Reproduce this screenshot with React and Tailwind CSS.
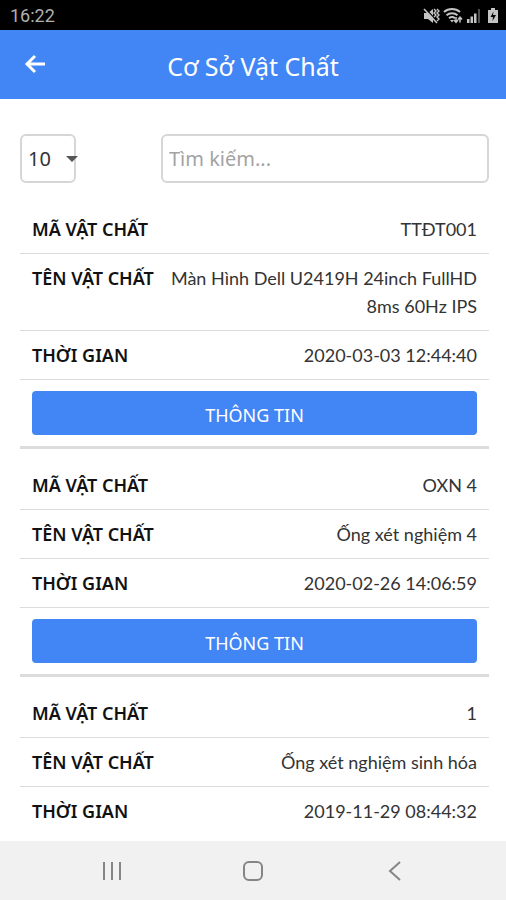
import { useState } from 'react';

const records = [
  { code: 'TTĐT001', name: 'Màn Hình Dell U2419H 24inch FullHD 8ms 60Hz IPS', time: '2020-03-03 12:44:40', hasInfo: true },
  { code: 'OXN 4', name: 'Ống xét nghiệm 4', time: '2020-02-26 14:06:59', hasInfo: true },
  { code: '1', name: 'Ống xét nghiệm sinh hóa', time: '2019-11-29 08:44:32', hasInfo: false },
];

function StatusBar() {
  return (
    <div className="flex h-[30px] shrink-0 items-center justify-between bg-black pr-1.5 pl-2.5 text-[#c4c4c4]">
      <span className="pt-0.5 font-[Roboto,sans-serif] text-lg leading-6 text-[#b0b0b0]">16:22</span>
      <div className="flex items-center gap-[3px] pt-0.5">
        {/* Rung */}
        <svg width="18" height="18" viewBox="0 0 18 18" fill="none" stroke="currentColor">
          <path d="M2 6h4l5-4v14l-5-4H2z" fill="currentColor" stroke="none" />
          <path d="M3 1l11 12" stroke="#000" strokeWidth="1.200" />
          <path d="M2 2l13 14" strokeWidth="1.600" />
          <path d="M12 2l2 2-2 2 2 2-2 2M15 2l2 2-2 2 2 2-2 2 2 2-2 2" strokeWidth="1.400" />
        </svg>
        {/* Wifi */}
        <svg width="20" height="18" viewBox="0 0 20 18" fill="none" stroke="currentColor" strokeWidth="2">
          <path d="M1 5c4.500-4 11.500-4 16 0M3.500 8.200c3-2.700 8-2.700 11 0M6 11.200c2-1.600 4-1.600 6 0" />
          <path d="M7 13l2 2.500 2-2.500z" fill="currentColor" stroke="none" />
          <path d="M13 10v5m-2-2l2 2.300 2-2.300M17 15.500v-5m-2 2l2-2.300 2 2.300" strokeWidth="1.500" />
        </svg>
        {/* Sóng */}
        <svg width="15" height="18" viewBox="0 0 15 18" fill="currentColor">
          <path d="M1 12h2.500v4H1zM4.500 9.500H7V16H4.500zM8 6.500h2.500V16H8z" />
          <path d="M12 2h2v14h-2z" opacity="0.4" />
        </svg>
        {/* Pin */}
        <svg width="16" height="18" viewBox="0 0 16 18">
          <path d="M7 1h4v2h3v13H4V3h3z" fill="currentColor" />
          <path d="M9.500 4.500L6.500 10H9l-.5 4 3.500-6H9z" fill="#000" />
        </svg>
      </div>
    </div>
  );
}

function RecordTable({ record }) {
  const rows = [
    ['MÃ VẬT CHẤT', record.code],
    ['TÊN VẬT CHẤT', record.name],
    ['THỜI GIAN', record.time],
  ];

  return (
    <table className="mb-3 w-full border-separate border-spacing-0 border-b-3 border-[#dcdcdc] text-lg leading-7 last:mb-0 last:border-b-0">
      <tbody className="[&>tr:last-child>*]:border-b-0">
        {rows.map(([label, value]) => (
          <tr key={label}>
            <th
              scope="row"
              className="border-b border-[#dcdcdc] py-2.5 pl-3 text-left align-top font-semibold whitespace-nowrap text-[#111111]"
            >
              {label}
            </th>
            <td className="border-b border-[#dcdcdc] py-2.5 pr-3 pl-3 text-right font-[Lato,'Noto_Sans',sans-serif] text-[#333333]">
              {value}
            </td>
          </tr>
        ))}
        {record.hasInfo && (
          <tr>
            <td colSpan={2} className="px-3 py-[11px]">
              <button type="button" className="block h-11 w-full rounded bg-[#4285f4] pt-1 text-lg leading-7 text-white">
                THÔNG TIN
              </button>
            </td>
          </tr>
        )}
      </tbody>
    </table>
  );
}

function App() {
  const [pageSize, setPageSize] = useState('10');
  const [search, setSearch] = useState('');

  return (
    <div className="flex h-screen flex-col bg-white font-['Noto_Sans',sans-serif]">
      <StatusBar />

      {/* Header */}
      <header className="grid h-[69px] shrink-0 grid-cols-[46px_1fr_46px] items-center bg-[#4285f4] px-3 text-white">
        <button type="button" aria-label="Quay lại" className="flex h-11 items-center justify-center">
          <svg width="22" height="22" viewBox="0 0 22 22" fill="none" stroke="currentColor" strokeWidth="3">
            <path d="M21 10H3M11 2l-8 8 8 8" />
          </svg>
        </button>
        <h1 className="pt-0.5 text-center text-[25px] leading-8">Cơ Sở Vật Chất</h1>
      </header>

      <main className="min-h-0 flex-1 overflow-hidden pt-[35px] pr-[17px] pl-5">
        {/* Bộ lọc */}
        <div className="mb-[22px] flex justify-between gap-[85px]">
          <div className="relative shrink-0">
            <select
              aria-label="Số dòng"
              value={pageSize}
              onChange={(e) => setPageSize(e.target.value)}
              className="h-[49px] w-14 appearance-none rounded-md border-2 border-[#d6d6d6] bg-white pl-1.5 text-xl text-[#333333]"
            >
              <option>10</option>
              <option>25</option>
              <option>50</option>
            </select>
            <svg className="pointer-events-none absolute top-[22px] -right-0.5" width="12" height="6" viewBox="0 0 12 6">
              <path d="M0 0h12L6 6z" fill="#555555" />
            </svg>
          </div>
          <input
            type="text"
            aria-label="Tìm kiếm"
            placeholder="Tìm kiếm..."
            value={search}
            onChange={(e) => setSearch(e.target.value)}
            className="h-[49px] min-w-0 flex-1 rounded-md border-2 border-[#d6d6d6] px-1.5 text-xl text-[#333333] placeholder:text-[#a3a3a3]"
          />
        </div>

        {records.map((record) => (
          <RecordTable key={record.code} record={record} />
        ))}
      </main>

      {/* Thanh điều hướng */}
      <nav className="grid h-[59px] shrink-0 grid-cols-[1fr_60px_1fr] items-center bg-[#f1f1f1] text-[#858585]">
        <button type="button" aria-label="Gần đây" className="flex justify-center">
          <svg width="20" height="20" viewBox="0 0 20 20" fill="none" stroke="currentColor" strokeWidth="2">
            <path d="M2 1v18M10 1v18M18 1v18" />
          </svg>
        </button>
        <button type="button" aria-label="Trang chủ" className="flex justify-center">
          <svg width="22" height="22" viewBox="0 0 22 22" fill="none" stroke="currentColor" strokeWidth="2">
            <rect x="2" y="2" width="18" height="18" rx="5" />
          </svg>
        </button>
        <button type="button" aria-label="Trở về" className="flex justify-center">
          <svg width="20" height="20" viewBox="0 0 20 20" fill="none" stroke="currentColor" strokeWidth="2">
            <path d="M15 1L5 10l10 9" />
          </svg>
        </button>
      </nav>
    </div>
  );
}

export default App;
